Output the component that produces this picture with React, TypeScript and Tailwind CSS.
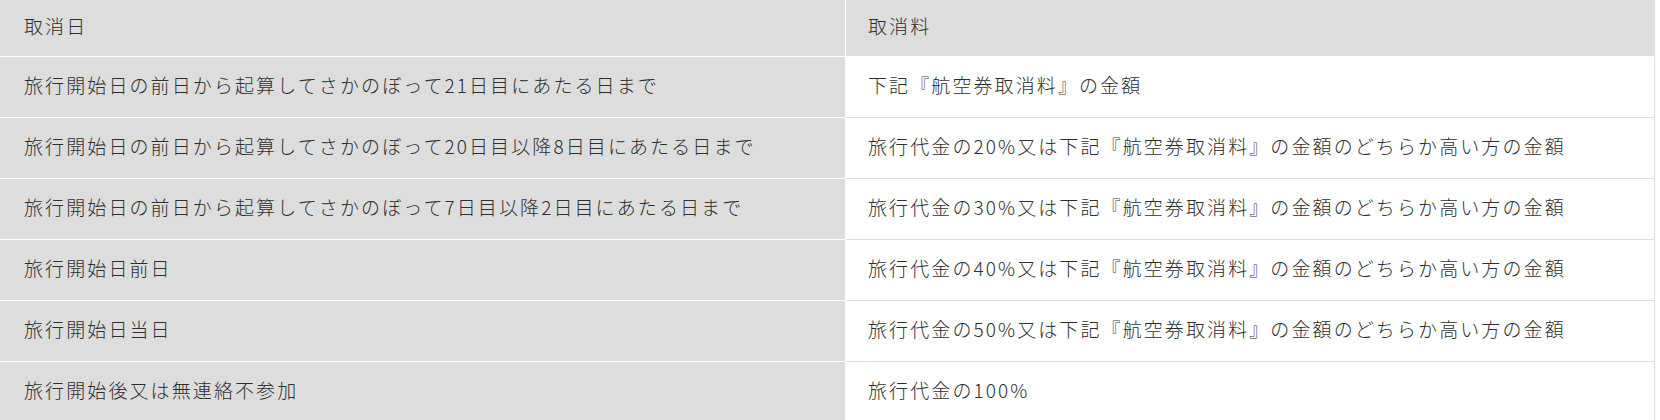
const rows = [
  ["旅行開始日の前日から起算してさかのぼって21日目にあたる日まで", "下記『航空券取消料』の金額"],
  ["旅行開始日の前日から起算してさかのぼって20日目以降8日目にあたる日まで", "旅行代金の20%又は下記『航空券取消料』の金額のどちらか高い方の金額"],
  ["旅行開始日の前日から起算してさかのぼって7日目以降2日目にあたる日まで", "旅行代金の30%又は下記『航空券取消料』の金額のどちらか高い方の金額"],
  ["旅行開始日前日", "旅行代金の40%又は下記『航空券取消料』の金額のどちらか高い方の金額"],
  ["旅行開始日当日", "旅行代金の50%又は下記『航空券取消料』の金額のどちらか高い方の金額"],
  ["旅行開始後又は無連絡不参加", "旅行代金の100%"],
];

export default function App() {
  return (
    <div
      className="w-[1655px] bg-white text-[#2e2e2e] text-[19px] font-light tracking-[2.1px]"
      style={{ fontFamily: '"Noto Sans CJK JP", "Noto Sans", sans-serif' }}
    >
      <div className="flex h-[57px]">
        <div className="w-[846px] shrink-0 bg-[#dddddd] border-r border-b border-white flex items-center pl-6 pb-1">
          取消日
        </div>
        <div className="flex-1 bg-[#dddddd] border-b border-white flex items-center pl-[22px] pb-1">
          取消料
        </div>
      </div>
      {rows.map(([day, fee], i) => (
        <div key={i} className="flex h-[61px]">
          <div className="w-[846px] shrink-0 bg-[#dddddd] border-r border-b border-white flex items-center pl-6 pb-1">
            {day}
          </div>
          <div className="flex-1 bg-white border-b border-r border-[#dddddd] flex items-center pl-[22px] pb-1">
            {fee}
          </div>
        </div>
      ))}
    </div>
  );
}
